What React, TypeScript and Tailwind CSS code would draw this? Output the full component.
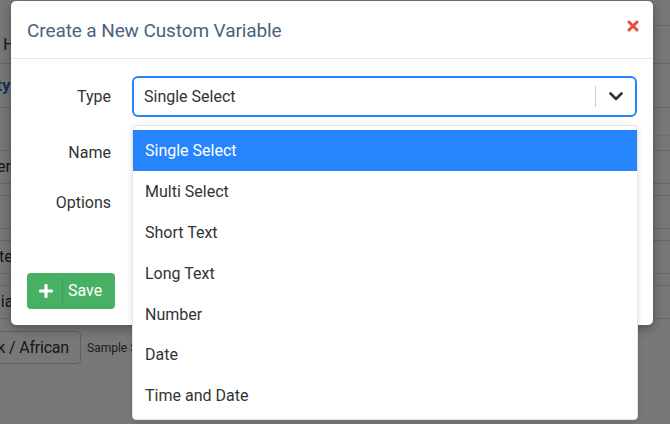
import React from "react";

const options = [
  "Single Select",
  "Multi Select",
  "Short Text",
  "Long Text",
  "Number",
  "Date",
  "Time and Date",
];

export default function App() {
  return (
    <div
      className="relative w-[670px] h-[424px] overflow-hidden bg-white"
      style={{ fontFamily: "Roboto, 'Noto Sans', sans-serif" }}
    >
      {/* background page */}
      <div className="flex flex-col text-[#333]">
        <div className="h-[26px] border-b border-[#ddd] text-[12px] ml-[20px] leading-[20px]">
          Sample SA &nbsp;&nbsp;&nbsp; Sample SB &nbsp;&nbsp;&nbsp; Sample SC
        </div>
        <div className="h-[38px] border-b border-[#ddd] flex items-center pl-[3px] text-[17px]">
          Hispanic
        </div>
        <div className="h-[44px] border-b border-[#ddd] flex items-center ml-[-56px] text-[17px] text-[#2a6fb5] font-bold">
          Ethnicity
        </div>
        <div className="h-[42px]" />
        <div className="flex flex-col gap-[11px]">
          <div className="h-[34px] border-y border-[#ddd] flex items-center ml-[-28px] text-[16px]">Other</div>
          <div className="h-[34px] border-y border-[#ddd] flex items-center ml-[-40px] text-[16px]">Asian</div>
          <div className="h-[34px] border-y border-[#ddd] flex items-center ml-[-28px] text-[16px]">White</div>
          <div className="h-[34px] border-y border-[#ddd] flex items-center ml-[-44px] text-[16px]">Hawaiian</div>
        </div>
        <div className="flex items-center gap-[6px] mt-[12px]">
          <div className="h-[33px] w-[160px] ml-[-79px] border border-[#ccc] rounded-[4px] flex items-center justify-end pr-[11px] text-[16px] tracking-[-0.2px]">
            Black / African
          </div>
          <div className="text-[12px] text-[#444]">Sample Size</div>
        </div>
      </div>
      <div className="absolute left-[653px] top-[135px] w-[20px] border-t border-[#eee]" />

      {/* overlay */}
      <div className="absolute inset-0 bg-black/[0.53]" />

      {/* modal */}
      <div className="absolute left-[11px] top-[1px] w-[642px] h-[324px] bg-white rounded-[5px] shadow-[0_3px_12px_rgba(0,0,0,0.35)]">
        <div className="h-[58px] border-b border-[#e5e5e5] flex items-center justify-between pl-[16px] pr-[14px]">
          <div className="text-[19px] text-[#4a6280] pt-[3px] tracking-[-0.1px]">Create a New Custom Variable</div>
          <svg width="12" height="12" viewBox="0 0 12 12" className="mb-[8px]">
            <path d="M2 2 L10 10 M10 2 L2 10" stroke="#e74c3c" strokeWidth="3" strokeLinecap="round" />
          </svg>
        </div>
        <div className="px-[16px] pt-[17px]">
          <div className="flex items-center gap-[21px] h-[41px]">
            <div className="w-[84px] text-right text-[16px] text-[#333]">Type</div>
            <div className="relative flex-1 h-[41px] border-2 border-[#2684ff] rounded-[6px] flex items-center pl-[10px] text-[16px] text-[#333]">
              <span className="flex-1">Single Select</span>
              <div className="w-px h-[21px] bg-[#ccc]" />
              <div className="w-[39px] flex justify-center">
                <svg width="14" height="9" viewBox="0 0 14 9">
                  <path d="M1.5 1.5 L7 7 L12.5 1.5" stroke="#333" strokeWidth="2.6" fill="none" strokeLinecap="round" strokeLinejoin="round" />
                </svg>
              </div>
            </div>
          </div>
          <div className="flex items-center gap-[21px] h-[41px] mt-[15px]">
            <div className="w-[84px] text-right text-[16px] text-[#333]">Name</div>
            <div className="flex-1 h-[38px] border border-[#ccc] rounded-[4px]" />
          </div>
          <div className="flex items-center gap-[21px] h-[41px] mt-[9px]">
            <div className="w-[84px] text-right text-[16px] text-[#333]">Options</div>
            <div className="flex-1 h-[38px] border border-[#ccc] rounded-[4px]" />
          </div>
          <div className="mt-[50px]">
            <button className="w-[88px] h-[36px] bg-[#48b064] rounded-[4px] flex items-center text-white text-[16px]">
              <div className="w-[35px] flex justify-center pl-[2px]">
                <svg width="14" height="14" viewBox="0 0 14 14">
                  <path d="M7 1.5 V12.5 M1.5 7 H12.5" stroke="white" strokeWidth="3.2" strokeLinecap="round" />
                </svg>
              </div>
              <div className="w-px h-[26px] bg-[#3f9c57]" />
              <span className="pl-[5px]">Save</span>
            </button>
          </div>
        </div>
      </div>

      {/* dropdown menu */}
      <div className="absolute left-[132px] top-[125px] w-[506px] bg-white rounded-[4px] border border-[#e6e6e6] shadow-[0_2px_6px_rgba(0,0,0,0.12)] pt-[4px] pb-[3px]">
        {options.map((o, i) => (
          <div
            key={o}
            className={
              i === 0
                ? "h-[40.8px] flex items-center pl-[12px] pt-[2px] text-[16px] bg-[#2684ff] text-white"
                : "h-[40.8px] flex items-center pl-[12px] pt-[2px] text-[16px] text-[#333]"
            }
          >
            {o}
          </div>
        ))}
      </div>
    </div>
  );
}
